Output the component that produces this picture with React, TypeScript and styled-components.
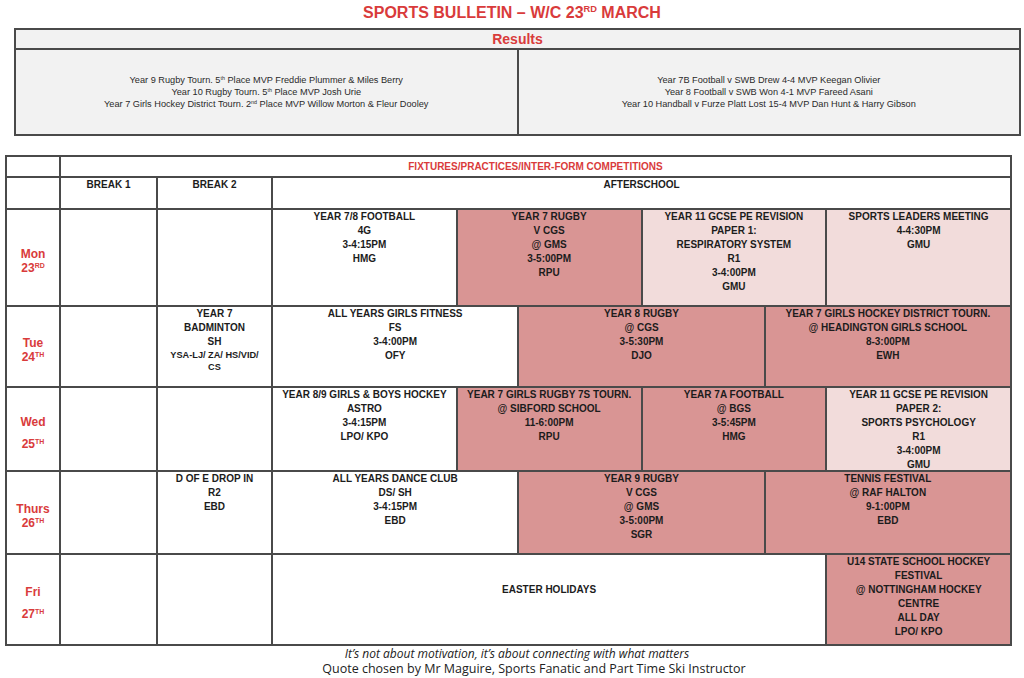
import React from 'react';
import styled, { createGlobalStyle } from 'styled-components';

const GlobalStyle = createGlobalStyle`
    body {
        margin: 0;
        background: #ffffff;
        font-family: 'Liberation Sans', Arial, sans-serif;
        color: #1c1c1c;
    }
`;

const RED = '#d93b3b';
const LINE = '#4a4a4a';

// whole sheet
const Page = styled.div`
    width: 1024px;
    display: flex;
    flex-direction: column;
`;

const Title = styled.h1`
    margin: 0;
    padding-top: 3px;
    text-align: center;
    color: ${RED};
    font-size: 16px;
    line-height: 20px;
    font-weight: 700;
`;

const Sup = styled.sup`
    font-size: 0.58em;
    line-height: 0;
    vertical-align: 0.6em;
`;

// results box
const Results = styled.section`
    margin: 5px 0 0 14px;
    width: 1007px;
    box-sizing: border-box;
    display: grid;
    grid-template-columns: 1fr 1fr;
    grid-template-rows: 18px 84px;
    gap: 2px;
    padding: 2px;
    background: ${LINE};
`;

const ResultsHead = styled.h2`
    grid-column: span 2;
    margin: 0;
    background: #f2f2f2;
    color: ${RED};
    font-size: 14px;
    line-height: 18px;
    font-weight: 700;
    text-align: center;
`;

const ResultsList = styled.div`
    background: #f2f2f2;
    display: flex;
    flex-direction: column;
    justify-content: center;
    align-items: center;
    font-size: 9.2px;
    line-height: 12px;
    color: #2a2a2a;
`;

// timetable
const Timetable = styled.section`
    margin: 19px 0 0 5px;
    width: 1007px;
    box-sizing: border-box;
    display: grid;
    grid-template-columns: 52px 95px 113px repeat(12, 1fr);
    grid-template-rows: 19px 30px 95px 79px 82px 81px 89px;
    gap: 2px;
    padding: 2px;
    background: ${LINE};
`;

type Tone = 'white' | 'dark' | 'light';

const toneColour: Record<Tone, string> = {
    white: '#ffffff',
    dark: '#d99594',
    light: '#f2dcdb',
};

const Cell = styled.div<{ $span?: number; $tone?: Tone }>`
    grid-column: span ${(p) => p.$span ?? 1};
    background: ${(p) => toneColour[p.$tone ?? 'white']};
    text-align: center;
    font-size: 10px;
    line-height: 14px;
    font-weight: 700;
    color: #1c1c1c;
    overflow: hidden;
`;

const FixturesHead = styled(Cell)`
    color: ${RED};
    line-height: 19px;
`;

const DayCell = styled.div<{ $gap?: number }>`
    background: #ffffff;
    display: flex;
    flex-direction: column;
    justify-content: center;
    align-items: center;
    gap: ${(p) => p.$gap ?? 0}px;
    padding-top: 7px;
    box-sizing: border-box;
    color: ${RED};
    font-size: 12px;
    line-height: 14px;
    font-weight: 700;
`;

const Small = styled.div`
    font-size: 9.2px;
    line-height: 12px;
`;

const Quote = styled.footer`
    display: flex;
    flex-direction: column;
    align-items: center;
    padding-left: 10px;
    font-family: 'Open Sans', 'Liberation Sans', sans-serif;
    font-size: 12px;
    line-height: 15px;
    color: #222;

    em {
        font-style: italic;
    }

    span {
        padding-left: 34px;
        font-size: 12.5px;
    }
`;

type Slot = { lines: string[]; span: number; tone?: Tone };

const Lines = ({ lines }: { lines: string[] }) => (
    <>
        {lines.map((l, i) => (
            <div key={i}>{l || '\u00a0'}</div>
        ))}
    </>
);

const days: {
    name: string;
    date: string;
    suffix: string;
    gap?: number;
    break1: string[];
    break2: React.ReactNode;
    slots: Slot[];
}[] = [
    {
        name: 'Mon',
        date: '23',
        suffix: 'RD',
        break1: [],
        break2: null,
        slots: [
            { lines: ['YEAR  7/8 FOOTBALL', '4G', '3-4:15PM', 'HMG'], span: 3 },
            { lines: ['YEAR 7 RUGBY', 'V CGS', '@ GMS', '3-5:00PM', 'RPU'], span: 3, tone: 'dark' },
            {
                lines: ['YEAR 11 GCSE PE REVISION', 'PAPER 1:', 'RESPIRATORY SYSTEM', 'R1', '3-4:00PM', 'GMU'],
                span: 3,
                tone: 'light',
            },
            { lines: ['SPORTS LEADERS MEETING', '4-4:30PM', 'GMU'], span: 3, tone: 'light' },
        ],
    },
    {
        name: 'Tue',
        date: '24',
        suffix: 'TH',
        break1: [],
        break2: (
            <>
                <Lines lines={['YEAR 7', 'BADMINTON', 'SH']} />
                <Small>YSA-LJ/ ZA/ HS/VID/</Small>
                <Small>CS</Small>
            </>
        ),
        slots: [
            { lines: ['ALL YEARS GIRLS FITNESS', 'FS', '3-4:00PM', 'OFY'], span: 4 },
            { lines: ['YEAR 8 RUGBY', '@ CGS', '3-5:30PM', 'DJO'], span: 4, tone: 'dark' },
            {
                lines: ['YEAR 7 GIRLS HOCKEY DISTRICT TOURN.', '@ HEADINGTON GIRLS SCHOOL', '8-3:00PM', 'EWH'],
                span: 4,
                tone: 'dark',
            },
        ],
    },
    {
        name: 'Wed',
        date: '25',
        suffix: 'TH',
        gap: 8,
        break1: [],
        break2: null,
        slots: [
            { lines: ['YEAR 8/9 GIRLS & BOYS HOCKEY', 'ASTRO', '3-4:15PM', 'LPO/ KPO'], span: 3 },
            {
                lines: ['YEAR 7 GIRLS RUGBY 7S TOURN.', '@ SIBFORD SCHOOL', '11-6:00PM', 'RPU'],
                span: 3,
                tone: 'dark',
            },
            { lines: ['YEAR 7A FOOTBALL', '@ BGS', '3-5:45PM', 'HMG'], span: 3, tone: 'dark' },
            {
                lines: ['YEAR 11 GCSE PE REVISION', 'PAPER 2:', 'SPORTS PSYCHOLOGY', 'R1', '3-4:00PM', 'GMU'],
                span: 3,
                tone: 'light',
            },
        ],
    },
    {
        name: 'Thurs',
        date: '26',
        suffix: 'TH',
        break1: [],
        break2: <Lines lines={['D OF E DROP IN', 'R2', 'EBD']} />,
        slots: [
            { lines: ['ALL YEARS DANCE CLUB', 'DS/ SH', '3-4:15PM', 'EBD'], span: 4 },
            { lines: ['YEAR 9 RUGBY', 'V CGS', '@ GMS', '3-5:00PM', 'SGR'], span: 4, tone: 'dark' },
            { lines: ['TENNIS FESTIVAL', '@ RAF HALTON', '9-1:00PM', 'EBD'], span: 4, tone: 'dark' },
        ],
    },
    {
        name: 'Fri',
        date: '27',
        suffix: 'TH',
        gap: 8,
        break1: [],
        break2: null,
        slots: [
            { lines: ['', '', 'EASTER HOLIDAYS'], span: 9 },
            {
                lines: ['U14 STATE SCHOOL HOCKEY', 'FESTIVAL', '@ NOTTINGHAM HOCKEY', 'CENTRE', 'ALL DAY', 'LPO/ KPO'],
                span: 3,
                tone: 'dark',
            },
        ],
    },
];

export default function App() {
    return (
        <Page>
            <GlobalStyle />
            <Title>
                SPORTS BULLETIN – W/C 23<Sup>RD</Sup> MARCH
            </Title>

            <Results>
                <ResultsHead>Results</ResultsHead>
                <ResultsList>
                    <div>
                        Year 9 Rugby Tourn. 5<Sup>th</Sup> Place MVP Freddie Plummer &amp; Miles Berry
                    </div>
                    <div>
                        Year 10 Rugby Tourn. 5<Sup>th</Sup> Place MVP Josh Urie
                    </div>
                    <div>
                        Year 7 Girls Hockey District Tourn. 2<Sup>nd</Sup> Place MVP Willow Morton &amp; Fleur Dooley
                    </div>
                </ResultsList>
                <ResultsList>
                    <div>Year 7B Football v SWB Drew 4-4 MVP Keegan Olivier</div>
                    <div>Year 8 Football v SWB Won 4-1 MVP Fareed Asani</div>
                    <div>Year 10 Handball v Furze Platt Lost 15-4 MVP Dan Hunt &amp; Harry Gibson</div>
                </ResultsList>
            </Results>

            <Timetable>
                <Cell />
                <FixturesHead $span={14}>FIXTURES/PRACTICES/INTER-FORM COMPETITIONS</FixturesHead>

                <Cell />
                <Cell>BREAK 1</Cell>
                <Cell>BREAK 2</Cell>
                <Cell $span={12}>AFTERSCHOOL</Cell>

                {days.map((d) => (
                    <React.Fragment key={d.name}>
                        <DayCell $gap={d.gap}>
                            <div>{d.name}</div>
                            <div>
                                {d.date}
                                <Sup>{d.suffix}</Sup>
                            </div>
                        </DayCell>
                        <Cell>
                            <Lines lines={d.break1} />
                        </Cell>
                        <Cell>{d.break2}</Cell>
                        {d.slots.map((s, i) => (
                            <Cell key={i} $span={s.span} $tone={s.tone}>
                                <Lines lines={s.lines} />
                            </Cell>
                        ))}
                    </React.Fragment>
                ))}
            </Timetable>

            <Quote>
                <em>It’s not about motivation, it’s about connecting with what matters</em>
                <span>Quote chosen by Mr Maguire, Sports Fanatic and Part Time Ski Instructor</span>
            </Quote>
        </Page>
    );
}
